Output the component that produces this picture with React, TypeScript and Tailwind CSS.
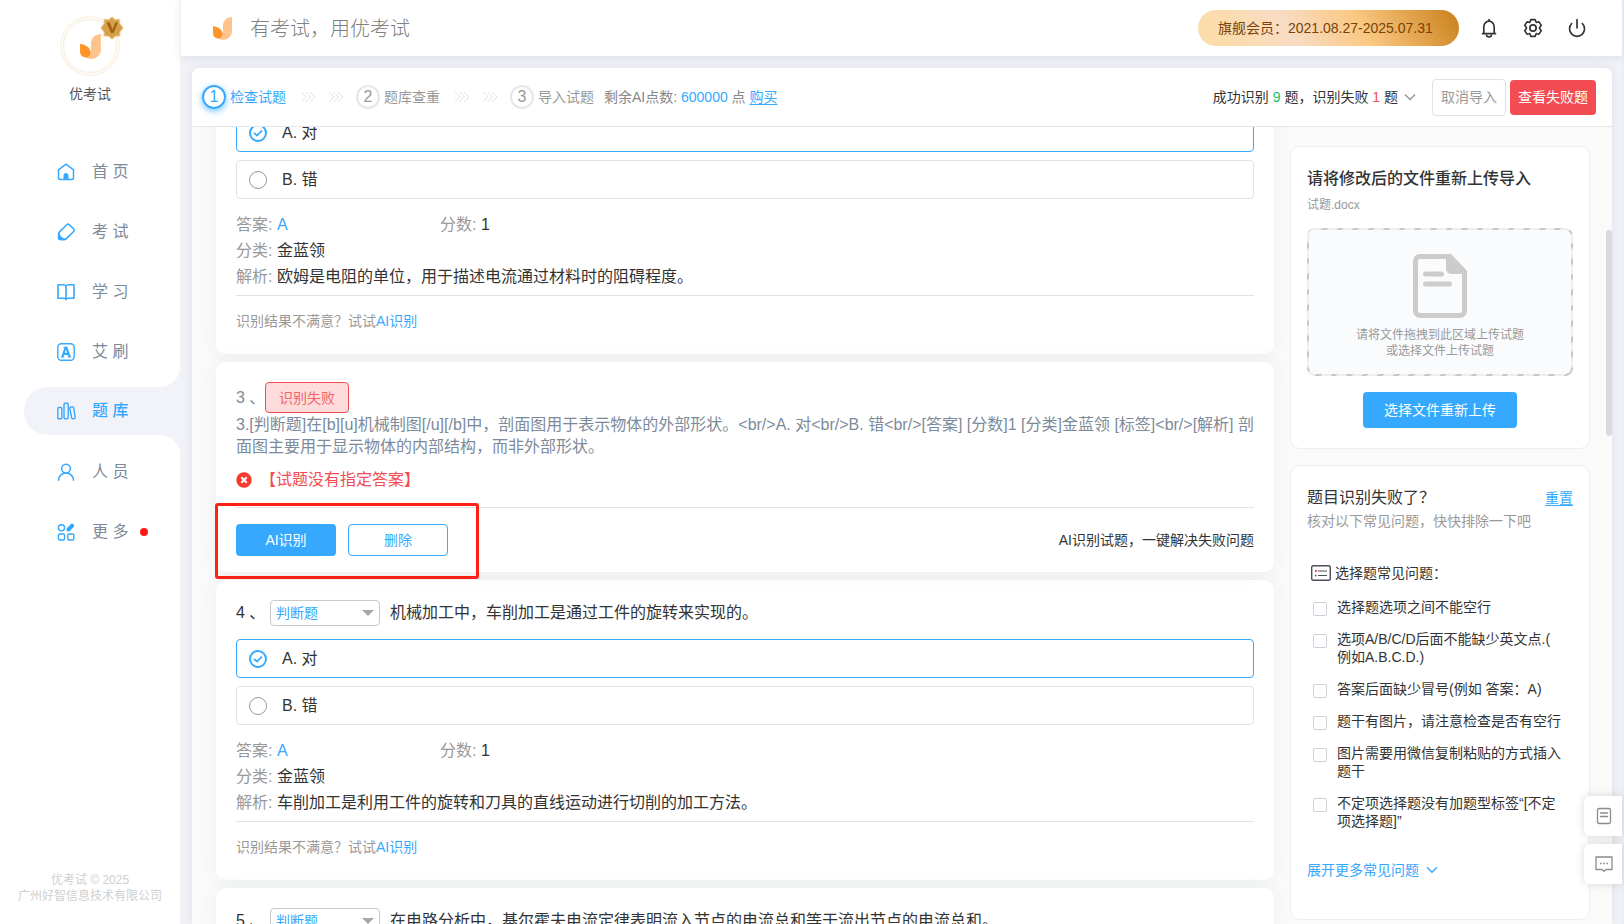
import React, { useState } from 'react';
import { ChevronDown, Power } from 'lucide-react';

const IconHome = () => (
  <svg className="w-[18px] h-[18px]" viewBox="0 0 18 18" fill="none" stroke="currentColor" strokeWidth="1.5" strokeLinejoin="round">
    <path d="M1.5 6.8 9 1.2l7.500 5.600V15a1.500 1.500 0 0 1-1.500 1.500H3A1.500 1.500 0 0 1 1.500 15z" />
    <path d="M6.500 16.500v-4a2.500 2.500 0 0 1 5 0v4z" fill="currentColor" stroke="none" />
  </svg>
);

const IconExam = () => (
  <svg className="w-[18px] h-[18px]" viewBox="0 0 18 18" fill="none" stroke="currentColor" strokeWidth="1.5" strokeLinejoin="round">
    <path d="M9.900 1.700a1.800 1.800 0 0 1 2.500 0l4.200 4.200a1.800 1.800 0 0 1 0 2.500l-6.900 7c-.7.700-1.500 1.100-2.500 1.100H3.500A1.900 1.900 0 0 1 1.600 14.600v-3.500c0-1 .4-1.800 1.100-2.500z" />
    <path d="M1.800 10.200c.4 3.200 2.800 5.600 6.800 6.200-.3.100-.6.100-.9.100H3.500A1.900 1.900 0 0 1 1.600 14.600z" fill="currentColor" />
  </svg>
);

const IconBook = () => (
  <svg className="w-[18px] h-[18px]" viewBox="0 0 18 18" fill="none" stroke="currentColor" strokeWidth="1.600" strokeLinejoin="round">
    <path d="M9 3.200C8.400 2.200 7.500 1.800 6.500 1.800H1v13.400h6c1 0 1.600.4 2 1.300.4-.9 1-1.300 2-1.300h6V1.800h-5.500c-1 0-1.900.4-2.500 1.400zM9 3.200v13" />
  </svg>
);

const IconBrush = () => (
  <svg className="w-[18px] h-[18px]" viewBox="0 0 18 18" fill="none" stroke="currentColor" strokeWidth="1.400" strokeLinejoin="round">
    <rect x=".8" y=".8" width="16.400" height="16.400" rx="3.500" />
    <path d="M5.300 14 8.600 4.500h.8L12.700 14M6.500 10.800h5" strokeWidth="2.200" />
    <path d="M3.800 14h3.600M10.600 14h3.600M6.500 4.500h4" strokeWidth="1.200" />
  </svg>
);

const IconBank = () => (
  <svg className="w-[19px] h-[18px]" viewBox="0 0 19 18" fill="none" stroke="currentColor" strokeWidth="1.400" strokeLinejoin="round">
    <rect x=".8" y="5.500" width="4" height="11.200" rx="1" />
    <rect x="7" y="1.300" width="4.200" height="15.400" rx="1.200" />
    <path d="m13.200 5.300 2.300-.4a1 1 0 0 1 1.100.8l1.600 9.700a1 1 0 0 1-.8 1.100l-1.600.2a1 1 0 0 1-1.100-.8l-1.900-9.500a1 1 0 0 1 .4-1.100z" />
  </svg>
);

const IconUser = () => (
  <svg className="w-[18px] h-[18px]" viewBox="0 0 18 18" fill="none" stroke="currentColor" strokeWidth="1.500" strokeLinecap="round">
    <circle cx="9" cy="5.600" r="4.400" />
    <path d="M1.500 17.200a7.500 7.200 0 0 1 15 0" />
  </svg>
);

const IconMore = () => (
  <svg className="w-[18px] h-[18px]" viewBox="0 0 18 18" fill="none" stroke="currentColor" strokeWidth="1.400">
    <circle cx="4.500" cy="4.800" r="3.100" />
    <rect x="1.500" y="11" width="6" height="6" rx="1.300" />
    <rect x="10.800" y="11" width="6" height="6" rx="1.300" />
    <path d="m11.500 6.500 3.600-3.800" strokeWidth="4" strokeLinecap="round" />
  </svg>
);

const IconBell = () => (
  <svg className="w-[18px] h-[20px]" viewBox="0 0 18 20" fill="none" stroke="currentColor" strokeWidth="1.700" strokeLinejoin="round" strokeLinecap="round">
    <path d="M3.800 15.300V9a5.200 5.800 0 0 1 10.400 0v6.300M2.500 15.600h13M9 3V1.600" />
    <path d="M6.600 17.200a2.400 1.600 0 0 0 4.800 0" />
  </svg>
);

const IconGear = () => (
  <svg className="w-[20px] h-[20px]" viewBox="0 0 24 24" fill="none" stroke="currentColor" strokeWidth="2" strokeLinejoin="round">
    <path d="m9.300 2-.7 2.300a1.200 1.200 0 0 1-1.500.8l-2.300-.5-2.700 4.200 1.500 1.900a2 2 0 0 1 0 2.600l-1.500 1.900 2.700 4.200 2.300-.5a1.200 1.200 0 0 1 1.500.8l.7 2.300h5.400l.7-2.300a1.200 1.200 0 0 1 1.500-.8l2.300.5 2.700-4.200-1.500-1.900a2 2 0 0 1 0-2.600l1.500-1.900-2.700-4.200-2.300.5a1.200 1.200 0 0 1-1.500-.8L14.700 2z" />
    <circle cx="12" cy="12" r="3.800" />
  </svg>
);

const Logo = ({ className }: { className: string }) => (
  <svg className={className} viewBox="0 0 20 24">
    <path d="M20 0C14 .5 10.500 4 10.500 9v4c0 4-1.500 7.500-5.500 9 1.500 1.300 3.500 1.900 5.500 1.900 5.500 0 9.500-3.900 9.500-9z" fill="#ffc48c" />
    <path d="M0 9.500c5.500.5 10 3.500 10 8.300 0 3-2 4.700-4.500 4.700-3.300 0-5.500-2.400-5.500-5.700z" fill="#ff9426" />
  </svg>
);

const IconArrows = () => (
  <svg className="w-4 h-3" viewBox="0 0 16 12" fill="none" stroke="#e2e2e2" strokeWidth="1">
    <path d="m1 1 5 5-5 5M5.500 1l5 5-5 5M10 1l5 5-5 5" />
  </svg>
);

const menuTop = [
  { icon: IconHome, label: '首 页' },
  { icon: IconExam, label: '考 试' },
  { icon: IconBook, label: '学 习' },
  { icon: IconBrush, label: '艾 刷' },
];

const menuBottom = [
  { icon: IconUser, label: '人 员' },
  { icon: IconMore, label: '更 多', dot: true },
];

const MenuLink = ({ icon: Icon, label, dot }: { icon: any; label: string; dot?: boolean }) => (
  <a href="#" className="flex items-center h-[60px] pl-[57px] text-[#7d8a9a]">
    <span className="w-[35px] text-[#36a9ff]"><Icon /></span>
    {label}
    {dot && <span className="w-2 h-2 ml-3 rounded-full bg-[#ff1a1a]" />}
  </a>
);

const Sidebar = () => (
  <aside className="w-[180px] shrink-0 flex flex-col bg-[#f2f3f8]">
    <div className="bg-white rounded-br-[20px]">
      <div className="flex flex-col items-center pt-4 pb-[41px]">
        <div className="relative w-[60px] h-[60px] rounded-full border-2 border-[#fbf4e8] p-px">
          <div className="w-full h-full rounded-full border border-[#f7ead6] flex items-center justify-center">
            <Logo className="w-[21px] h-[25px]" />
          </div>
          <svg className="absolute -top-[2px] -right-[6px] w-6 h-6" viewBox="0 0 24 24">
            <path d="m12 .8 3 2.800 4.500-.5.2 4.200L23.200 12l-3.300 4 .1 4-4.400.2-3.600 3-3.500-3-4.500-.2.100-4L.8 12l3.300-4.500L4 3.300l4.800.3z" fill="#d6a04b" stroke="#f0cf92" strokeWidth="1" />
            <path d="M6.500 6.500h3.200l2.800 7L15.300 6.500h2.700L13.500 17h-2.400z" fill="#a3620c" />
          </svg>
        </div>
        <p className="text-sm leading-5 mt-2 text-[#555]">优考试</p>
      </div>
      <nav className="-mt-[3px] pb-[5px]">
        {menuTop.map((item) => (
          <MenuLink key={item.label} {...item} />
        ))}
      </nav>
    </div>
    <div className="bg-white pl-6">
      <a href="#" className="flex items-center h-12 pl-[33px] rounded-l-full bg-[#f2f3f8] font-medium text-[#36a9ff]">
        <span className="w-[35px]"><IconBank /></span>
        题 库
      </a>
    </div>
    <div className="flex-1 flex flex-col justify-between bg-white rounded-tr-[20px] pt-[7px] pb-5">
      <nav>
        {menuBottom.map((item) => (
          <MenuLink key={item.label} {...item} />
        ))}
      </nav>
      <p className="text-center text-xs leading-4 text-[#cfcfcf]">
        优考试 © 2025<br />广州好智信息技术有限公司
      </p>
    </div>
  </aside>
);

const Header = () => (
  <header className="relative z-10 h-14 shrink-0 flex items-center bg-white border-l border-[#ebedf3] pl-8 pr-[35px] shadow-[0_2px_8px_rgba(60,60,100,0.1)]">
    <Logo className="w-[19px] h-[23px]" />
    <h1 className="ml-[18px] pt-[2px] text-xl font-light text-[#808080]">有考试，用优考试</h1>
    <div className="ml-auto w-[261px] h-9 pl-5 rounded-full flex items-center text-sm text-[#7b4207] bg-[linear-gradient(60deg,#fbdcaa_0%,#fbdcae_15%,#f8dcc4_35%,#fac882_62%,#cc841f_98%)]">
      旗舰会员：2021.08.27-2025.07.31
    </div>
    <div className="flex items-center gap-6 ml-5 text-[#333]">
      <button aria-label="通知" className="w-5 flex justify-center"><IconBell /></button>
      <button aria-label="设置" className="w-5 flex justify-center"><IconGear /></button>
      <button aria-label="退出" className="w-5 flex justify-center"><Power className="w-5 h-5" strokeWidth={2} /></button>
    </div>
  </header>
);

const Step = ({ no, label, active }: { no: number; label: string; active?: boolean }) => (
  <div className={`flex items-center gap-1 ${active ? 'text-[#36a9ff]' : 'text-[#999]'}`}>
    <span className={`w-6 h-6 rounded-full border-2 flex items-center justify-center text-base leading-5 ${active ? 'border-[#36a9ff] shadow-[0_2px_6px_rgba(54,169,255,0.7)]' : 'border-[#e6e6e6]'}`}>
      {no}
    </span>
    {label}
  </div>
);

const StepArrows = () => (
  <div className="flex gap-3 pl-[14px] pr-3">
    <IconArrows />
    <IconArrows />
  </div>
);

const StepBar = () => (
  <div className="h-[59px] shrink-0 flex items-center justify-between pl-[10px] pr-4 bg-white border-b border-[#e6e6e6] rounded-t-lg text-sm">
    <div className="flex items-center">
      <Step no={1} label="检查试题" active />
      <StepArrows />
      <Step no={2} label="题库查重" />
      <StepArrows />
      <Step no={3} label="导入试题" />
      <p className="ml-[10px] text-[#888]">
        剩余AI点数: <span className="text-[#36a9ff]">600000</span> 点 <a href="#" className="text-[#36a9ff] underline underline-offset-2">购买</a>
      </p>
    </div>
    <div className="flex items-center text-[#333]">
      <span>成功识别 <span className="text-[#19be6b]">9</span> 题，识别失败 <span className="text-[#f34d53]">1</span> 题</span>
      <svg className="w-3 h-2 ml-[6px] mr-4 text-[#999]" viewBox="0 0 12 8" fill="none" stroke="currentColor" strokeWidth="1.500">
        <path d="m1 1.500 5 5 5-5" />
      </svg>
      <button className="w-[74px] h-[37px] mr-1 border border-[#e2e2e2] rounded text-[#999]">取消导入</button>
      <button className="w-[86px] h-[35px] rounded bg-[#f34d53] text-white">查看失败题</button>
    </div>
  </div>
);

const Option = ({ name, text, checked, onChange }: { name: string; text: string; checked: boolean; onChange: () => void }) => (
  <label className={`flex items-center h-[39px] pl-3 pt-px rounded border ${checked ? 'border-[#36a9ff]' : 'border-[#e3e3e3]'}`}>
    <span className="relative w-[18px] h-[18px] mr-[15px]">
      <input
        type="radio"
        name={name}
        checked={checked}
        onChange={onChange}
        className="block w-[18px] h-[18px] appearance-none rounded-full border border-[#999] checked:border-2 checked:border-[#36a9ff]"
      />
      {checked && (
        <svg className="absolute inset-0 w-[18px] h-[18px] pointer-events-none" viewBox="0 0 18 18" fill="none" stroke="#36a9ff" strokeWidth="1.800">
          <path d="m5 8.800 3 2.800 5-5" />
        </svg>
      )}
    </span>
    {text}
  </label>
);

const Question = ({ no, title, analysis }: { no: number; title?: string; analysis?: string }) => {
  const [answer, setAnswer] = useState('A');

  return (
    <section className="bg-white rounded-[10px] px-5 pt-5 pb-[23px] shadow-[0_0_20px_rgba(40,60,60,0.06)]">
      {title && (
        <div className="flex items-center h-[26px] mb-[13px]">
          <span className="w-[34px] whitespace-nowrap">{no} 、</span>
          <div className="relative">
            <select aria-label={`第${no}题题型`} className="w-[110px] h-[26px] pl-[5px] appearance-none border border-[#c8c8c8] rounded text-sm text-[#36a9ff] bg-white">
              <option>判断题</option>
              <option>单选题</option>
            </select>
            <svg className="absolute right-[6px] top-[10px] w-3 h-[6px] pointer-events-none" viewBox="0 0 12 6" fill="#a6a6a6">
              <path d="M0 0h12L6 6z" />
            </svg>
          </div>
          <span className="ml-[10px]">{title}</span>
        </div>
      )}
      {analysis && (
        <>
          <div className="flex flex-col gap-2">
            <Option name={`q${no}`} text="A. 对" checked={answer === 'A'} onChange={() => setAnswer('A')} />
            <Option name={`q${no}`} text="B. 错" checked={answer === 'B'} onChange={() => setAnswer('B')} />
          </div>
          <div className="mt-[13px] pb-[5px] leading-[26px] border-b border-[#e3e3e3]">
            <div className="flex">
              <p className="w-[204px]"><span className="text-[#999]">答案:</span> <span className="text-[#36a9ff]">{answer}</span></p>
              <p><span className="text-[#999]">分数:</span> 1</p>
            </div>
            <p><span className="text-[#999]">分类:</span> 金蓝领</p>
            <p><span className="text-[#999]">解析:</span> {analysis}</p>
          </div>
          <p className="mt-[15px] text-sm text-[#999]">识别结果不满意？试试<a href="#" className="text-[#36a9ff]">AI识别</a></p>
        </>
      )}
    </section>
  );
};

const FailedQuestion = () => (
  <section className="relative bg-white rounded-[10px] px-5 pt-5 pb-4 shadow-[0_0_20px_rgba(40,60,60,0.06)] text-[#7d8a9a]">
    <div className="flex items-center h-[31px]">
      <span className="w-[29px] whitespace-nowrap">3 、</span>
      <span className="w-[84px] h-[31px] flex items-center justify-center rounded border border-[#f34d53] bg-[#ffdcdc] text-sm text-[#f0666b]">识别失败</span>
    </div>
    <p className="pt-px leading-[22px]">
      {'3.[判断题]在[b][u]机械制图[/u][/b]中，剖面图用于表示物体的外部形状。<br/>A. 对<br/>B. 错<br/>[答案] [分数]1 [分类]金蓝领 [标签]<br/>[解析] 剖面图主要用于显示物体的内部结构，而非外部形状。'}
    </p>
    <div className="flex items-center mt-[11px] pb-4 border-b border-[#e3e3e3] leading-[22px] text-[#f34d53]">
      <svg className="w-4 h-4 mr-2" viewBox="0 0 16 16">
        <circle cx="8" cy="8" r="7.700" fill="#f83a30" />
        <path d="m5.300 5.300 5.400 5.400M10.700 5.300l-5.400 5.400" stroke="#fff" strokeWidth="2" />
      </svg>
      【试题没有指定答案】
    </div>
    <div className="flex items-center gap-3 mt-4 text-sm">
      <button className="w-[100px] h-8 rounded bg-[#36a9ff] text-white">AI识别</button>
      <button className="w-[100px] h-8 rounded border border-[#36a9ff] text-[#36a9ff]">删除</button>
      <span className="ml-auto text-[#333]">AI识别试题，一键解决失败问题</span>
    </div>
    <div className="absolute z-10 -left-px top-[141px] w-[264px] h-[76px] border-[3px] border-[#ff2018] rounded-[3px] pointer-events-none" />
  </section>
);

const UploadCard = () => (
  <section className="bg-white border border-[#e8eef4] rounded-[10px] px-4 pt-5 pb-5 flex flex-col">
    <h2 className="font-medium leading-6 text-[#333]">请将修改后的文件重新上传导入</h2>
    <p className="mt-1 mb-px text-xs leading-5 text-[#999]">试题.docx</p>
    <div className="mt-3 h-[148px] p-[2px] rounded-lg bg-[repeating-linear-gradient(135deg,#c8c8c8_0,#c8c8c8_4px,#eeeeee_4px,#eeeeee_11px)]">
      <div className="h-full rounded-[6px] bg-[#fafbfd] flex flex-col items-center pt-6 text-center text-xs leading-4 text-[#999]">
        <svg className="w-[54px] h-16 mb-[9px]" viewBox="0 0 54 64" fill="none">
          <path d="M7 2.500h30L51.500 18v39a4.500 4.500 0 0 1-4.500 4.500H7A4.500 4.500 0 0 1 2.500 57V7A4.500 4.500 0 0 1 7 2.500z" stroke="#ccc" strokeWidth="5" />
          <path d="M33 1h5l15 15v4H38a5 5 0 0 1-5-5z" fill="#ccc" />
          <path d="M12.500 20h16M12.500 30h24" stroke="#ccc" strokeWidth="5" strokeLinecap="round" />
        </svg>
        请将文件拖拽到此区域上传试题<br />或选择文件上传试题
      </div>
    </div>
    <button className="mt-4 w-[154px] h-9 self-center rounded bg-[#36a9ff] text-white text-sm">选择文件重新上传</button>
  </section>
);

// \u200b lets the line break right after the bracket
const problems = [
  '选择题选项之间不能空行',
  '选项A/B/C/D后面不能缺少英文点.(\u200b例如A.B.C.D.)',
  '答案后面缺少冒号(例如 答案：A)',
  '题干有图片，请注意检查是否有空行',
  '图片需要用微信复制粘贴的方式插入题干',
  '不定项选择题没有加题型标签“[不定项选择题]”',
];

const ProblemCard = () => (
  <section className="bg-white border border-[#e8eef4] rounded-[10px] px-4 pt-5 pb-[39px] text-sm text-[#333]">
    <div className="flex items-center justify-between">
      <h2 className="text-base leading-6">题目识别失败了？</h2>
      <a href="#" className="text-[#36a9ff] underline underline-offset-2">重置</a>
    </div>
    <p className="mt-px text-[#999]">核对以下常见问题，快快排除一下吧</p>
    <h3 className="flex items-center mt-8 pl-1">
      <svg className="w-5 h-4 mr-1" viewBox="0 0 20 16" fill="none" stroke="#4a4e57">
        <rect x=".7" y=".7" width="18.600" height="14.600" rx="1.500" strokeWidth="1.400" />
        <path d="M7 6h9M7 10.500h9" strokeWidth="1.200" />
        <path d="M4 6h2" stroke="#f34d53" strokeWidth="2" />
        <path d="M4 10.500h1.500" strokeWidth="1.500" />
      </svg>
      选择题常见问题：
    </h3>
    <ul className="mt-[15px] flex flex-col gap-[14px] pl-[6px] pr-3">
      {problems.map((text) => (
        <li key={text}>
          <label className="flex items-start leading-[18px]">
            <input type="checkbox" className="w-[14px] h-[14px] mt-1 mr-[10px] shrink-0 appearance-none border border-[#cdd1d9] rounded-[2px] bg-white checked:bg-[#36a9ff]" />
            <span className="break-all">{text}</span>
          </label>
        </li>
      ))}
    </ul>
    <button className="mt-[30px] flex items-center gap-1 text-[#36a9ff]">
      展开更多常见问题
      <ChevronDown className="w-[18px] h-[18px]" strokeWidth={2} />
    </button>
  </section>
);

const FloatTools = () => (
  <div className="fixed z-20 right-[2px] bottom-10 flex flex-col gap-2 text-[#8c8c8c]">
    <button aria-label="文档" className="w-[38px] h-10 pl-[2px] rounded-l-md bg-white shadow-[0_0_10px_rgba(0,0,0,0.15)] flex items-center justify-center">
      <svg className="w-4 h-[18px]" viewBox="0 0 16 18" fill="none" stroke="currentColor" strokeWidth="1.300" strokeLinecap="round">
        <rect x="1.500" y="1.500" width="13" height="15" rx="1.800" />
        <path d="M4.500 6h7M4.500 9.500h7" />
      </svg>
    </button>
    <button aria-label="反馈" className="w-[38px] h-10 pl-[2px] rounded-l-md bg-white shadow-[0_0_10px_rgba(0,0,0,0.15)] flex items-center justify-center">
      <svg className="w-[18px] h-[18px]" viewBox="0 0 18 18" fill="none" stroke="currentColor" strokeWidth="1.300" strokeLinejoin="round">
        <path d="M1 2h16v12.500h-6L9 16.300l-2-1.800H1z" />
        <path d="M5 8.500h1.600M8.200 8.500h1.600M11.400 8.500H13" strokeWidth="1.600" />
      </svg>
    </button>
  </div>
);

const App = () => (
  <div className="h-screen flex overflow-hidden bg-[#f2f3f8] font-['Liberation_Sans','Noto_Sans_CJK_SC',sans-serif] text-base text-[#333]">
    <Sidebar />
    <div className="flex-1 min-w-0 flex flex-col border-r-2 border-[#e9eef6]">
      <Header />
      <main className="flex-1 min-h-0 mt-3 ml-3 mr-[10px] flex flex-col rounded-t-lg bg-[#fafafa] shadow-[0_0_12px_rgba(60,60,100,0.1)]">
        <StepBar />
        <div className="relative flex-1 min-h-0 flex items-start gap-4 pl-6 pr-[22px] overflow-hidden">
          {/* the list is scrolled down to the failed question */}
          <div className="flex-1 min-w-0 -mt-[34px] flex flex-col gap-2">
            <Question no={2} analysis="欧姆是电阻的单位，用于描述电流通过材料时的阻碍程度。" />
            <FailedQuestion />
            <Question no={4} title="机械加工中，车削加工是通过工件的旋转来实现的。" analysis="车削加工是利用工件的旋转和刀具的直线运动进行切削的加工方法。" />
            <Question no={5} title="在电路分析中，基尔霍夫电流定律表明流入节点的电流总和等于流出节点的电流总和。" />
          </div>
          <div className="w-[300px] shrink-0 mt-[19px] flex flex-col gap-4">
            <UploadCard />
            <ProblemCard />
          </div>
          <div className="absolute right-0 top-[103px] w-[6px] h-[206px] rounded-full bg-[#d9dadc]" />
        </div>
      </main>
    </div>
    <FloatTools />
  </div>
);

export default App;
